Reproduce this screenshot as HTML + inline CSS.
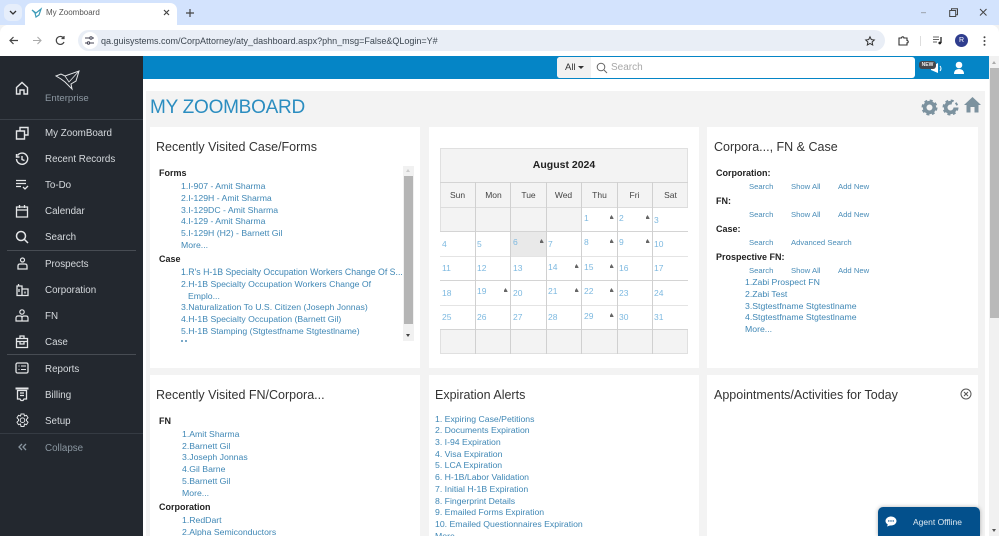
<!DOCTYPE html>
<html><head><meta charset="utf-8"><title>My Zoomboard</title>
<style>
*{box-sizing:border-box}
html,body{margin:0;padding:0;width:999px;height:536px;overflow:hidden;background:#f3f3f3;font-family:"Liberation Sans",sans-serif}
body{filter:blur(.3px)}
.a{position:absolute}
.t{position:absolute;white-space:nowrap;line-height:12px}
.l{font-size:8.7px;color:#3f87b5}
.s{font-size:7.7px;color:#4a8db8}
.b{font-size:9px;color:#222;font-weight:bold}
.h{font-size:12.5px;color:#333;line-height:16px}
.n{font-size:9.8px;color:#d6dade;left:45px;line-height:12px}
.card{position:absolute;background:#fff}
.d{position:absolute;font-size:8.5px;color:#7db9e0;line-height:10px}
.w{position:absolute;font-size:8.5px;color:#444;line-height:10px;text-align:center;width:35px;top:190px}
.c{position:absolute;width:1px;background:#d0d0d0;top:182px;height:172px}
.r{position:absolute;height:1px;background:#d4d4d4;left:440px;width:248px}
.m{position:absolute;width:4px;height:4px;margin:1px 0 0 .5px;background:#666;clip-path:polygon(50% 0,100% 80%,100% 100%,0 100%,0 80%)}
svg{position:absolute;overflow:visible}
</style></head><body>

<!-- browser chrome -->
<div class="a" style="left:0;top:0;width:999px;height:25px;background:#d3e3fd"></div>
<div class="a" style="left:4px;top:4px;width:18px;height:17px;border-radius:6px;background:#e6eefb"></div>
<svg style="left:9px;top:10px" width="8" height="6"><path d="M1 1l3 3 3-3" fill="none" stroke="#333" stroke-width="1.3"/></svg>
<div class="a" style="left:25px;top:3px;width:152px;height:23px;background:#fff;border-radius:7px 7px 0 0"></div>
<svg style="left:31px;top:8px" width="11" height="10"><path d="M1 2l4 3 5-4-2 6-3 2-1-4z" fill="none" stroke="#3d9bb8" stroke-width="1.2"/></svg>
<div class="t" style="left:46px;top:7px;font-size:8px;color:#555">My Zoomboard</div>
<svg style="left:163px;top:9px" width="8" height="8"><path d="M1 1l5 5M6 1L1 6" stroke="#444" stroke-width="1.2"/></svg>
<svg style="left:185px;top:8px" width="10" height="10"><path d="M5 1v8M1 5h8" stroke="#444" stroke-width="1.2"/></svg>
<div class="a" style="left:0;top:25px;width:999px;height:31px;background:#fff;border-radius:8px 8px 0 0"></div>
<div class="a" style="left:78px;top:30px;width:807px;height:21px;border-radius:11px;background:#e9eef6"></div>
<div class="a" style="left:82px;top:32px;width:16px;height:17px;border-radius:8px;background:#fff"></div>
<svg style="left:8px;top:35px" width="11" height="11"><path d="M10 5.500H2M5.500 2L2 5.500 5.500 9" fill="none" stroke="#444" stroke-width="1.2"/></svg>
<svg style="left:32px;top:35px" width="11" height="11"><path d="M1 5.500h8M5.500 2L9 5.500 5.500 9" fill="none" stroke="#aaa" stroke-width="1.1"/></svg>
<svg style="left:55px;top:35px" width="11" height="11"><path d="M8.500 3A4 4 0 1 0 9 7M9 1v2.500H6.500" fill="none" stroke="#444" stroke-width="1.2"/></svg>
<svg style="left:84px;top:36px" width="11" height="10"><path d="M1 2h5M8 2h2M1 7h2M6 7h4" stroke="#445" stroke-width="1"/><circle cx="7" cy="2" r="1.200" fill="none" stroke="#445"/><circle cx="4.500" cy="7" r="1.200" fill="none" stroke="#445"/></svg>
<div class="t" style="left:101px;top:35px;font-size:9px;color:#3c4650">qa.guisystems.com/CorpAttorney/aty_dashboard.aspx?phn_msg=False&amp;QLogin=Y#</div>
<svg style="left:865px;top:36px" width="10" height="10"><path d="M5 .8l1.300 2.800 3 .4-2.200 2 .6 3L5 7.500 2.300 9l.6-3L.7 4l3-.4z" fill="none" stroke="#333" stroke-width="1"/></svg>
<svg style="left:898px;top:35px" width="11" height="11"><path d="M1 3h2.500a1.200 1.200 0 0 1 2.400 0H9v2.500a1.200 1.200 0 0 1 0 2.400V10H1z" fill="none" stroke="#333" stroke-width="1.100"/></svg>
<div class="a" style="left:920px;top:36px;width:1px;height:10px;background:#ddd"></div>
<svg style="left:933px;top:36px" width="10" height="9"><path d="M0 1h6M0 3.500h6M0 6h4" stroke="#666" stroke-width="1"/><path d="M8 1v6" stroke="#222" stroke-width="1.300"/><circle cx="6.800" cy="7" r="1.400" fill="#222"/></svg>
<div class="a" style="left:955px;top:34px;width:13px;height:13px;border-radius:50%;background:#2f3d8e;color:#fff;font-size:7px;line-height:13px;text-align:center">R</div>
<svg style="left:983px;top:36px" width="3" height="10"><circle cx="1.500" cy="1.200" r="1" fill="#444"/><circle cx="1.500" cy="5" r="1" fill="#444"/><circle cx="1.500" cy="8.800" r="1" fill="#444"/></svg>
<div class="t" style="left:921px;top:6px;font-size:9px;color:#777">&#8211;</div>
<svg style="left:949px;top:8px" width="9" height="9"><path d="M.7 2.500h6v6h-6zM2.500 2.500V.7h6v6H6.700" fill="none" stroke="#444" stroke-width="1"/></svg>
<svg style="left:979px;top:8px" width="9" height="9"><path d="M1 1l6.500 6.500M7.500 1L1 7.500" stroke="#444" stroke-width="1"/></svg>

<!-- sidebar -->
<div class="a" style="left:0;top:56px;width:143px;height:480px;background:#23282f"></div>
<svg style="left:15px;top:81px" width="14" height="14"><path d="M1.500 6.500L7 1.500l5.500 5V13H9V9H5v4H1.500z" fill="none" stroke="#e4e6e8" stroke-width="1.400"/></svg>
<svg style="left:55px;top:70px" width="25" height="21"><path d="M1 6L6 4l4 2L24 1l-3 10-5 3 1 5-7-7-4-3z" fill="none" stroke="#e4e6e8" stroke-width="1"/><path d="M10 6l4 6L24 1" fill="none" stroke="#e4e6e8" stroke-width=".8"/></svg>
<div class="t" style="left:45px;top:93px;font-size:9.6px;color:#8e99a3">Enterprise</div>
<div class="a" style="left:0;top:119px;width:143px;height:1px;background:#3a4048"></div>
<div class="a" style="left:7px;top:250px;width:129px;height:1px;background:#474c53"></div>
<div class="a" style="left:7px;top:354px;width:129px;height:1px;background:#474c53"></div>
<div class="a" style="left:0;top:433px;width:143px;height:1px;background:#353b43"></div>

<div class="t n" style="top:128px">My ZoomBoard</div>
<div class="t n" style="top:154px">Recent Records</div>
<div class="t n" style="top:180px">To-Do</div>
<div class="t n" style="top:206px">Calendar</div>
<div class="t n" style="top:232px">Search</div>
<div class="t n" style="top:259px">Prospects</div>
<div class="t n" style="top:285px">Corporation</div>
<div class="t n" style="top:311px">FN</div>
<div class="t n" style="top:337px">Case</div>
<div class="t n" style="top:364px">Reports</div>
<div class="t n" style="top:390px">Billing</div>
<div class="t n" style="top:416px">Setup</div>
<div class="t n" style="top:443px;color:#8a96a0">Collapse</div>

<svg style="left:15px;top:126px" width="14" height="14"><path d="M1.500 5h8v8h-8zM5 5V1.500h8V9H9.500" fill="none" stroke="#e4e6e8" stroke-width="1.400"/></svg>
<svg style="left:15px;top:152px" width="14" height="14"><path d="M2.500 3.500a5.600 5.600 0 1 1-1 3.500M1.500 2v3h3M7 4v3.500l2.500 1" fill="none" stroke="#e4e6e8" stroke-width="1.400"/></svg>
<svg style="left:15px;top:179px" width="14" height="11"><path d="M1 1.500h10M1 4.500h10M1 7.500h5M8 8l2 2 3-3" fill="none" stroke="#e4e6e8" stroke-width="1.300"/></svg>
<svg style="left:15px;top:204px" width="14" height="14"><path d="M1.500 3h11v10h-11zM1.500 6h11M4.500 1v3M9.500 1v3" fill="none" stroke="#e4e6e8" stroke-width="1.300"/></svg>
<svg style="left:15px;top:230px" width="14" height="14"><circle cx="6" cy="6" r="4.500" fill="none" stroke="#e4e6e8" stroke-width="1.500"/><path d="M9.500 9.500l3.500 3.500" stroke="#e4e6e8" stroke-width="1.500"/></svg>
<svg style="left:16px;top:257px" width="13" height="13"><circle cx="6.500" cy="3" r="2" fill="none" stroke="#e4e6e8" stroke-width="1.200"/><path d="M2 12V9q0-2 2-2h5q2 0 2 2v3z" fill="none" stroke="#e4e6e8" stroke-width="1.300"/></svg>
<svg style="left:16px;top:283px" width="13" height="13"><path d="M1 12.500V3h5v9.500zM6 6h6v6.500H6M2.500 1v2M3 6v3M9 8.500v2" fill="none" stroke="#e4e6e8" stroke-width="1.300"/></svg>
<svg style="left:15px;top:309px" width="14" height="13"><circle cx="7" cy="3" r="2.200" fill="none" stroke="#e4e6e8" stroke-width="1.200"/><path d="M1 12V9q0-2 2-2h2.500q1.500 0 1.500 2v3zM7 12V9q0-2 2-2h2q2 0 2 2v3z" fill="none" stroke="#e4e6e8" stroke-width="1.200"/></svg>
<svg style="left:15px;top:335px" width="14" height="13"><path d="M1.500 3.500h11v9h-11zM5 3.500V1h4v2.500M1.500 6.500h11M5 6.500v2.500h4V6.500" fill="none" stroke="#e4e6e8" stroke-width="1.300"/></svg>
<svg style="left:15px;top:362px" width="14" height="12"><rect x="1" y="1" width="12" height="10" rx="1.500" fill="none" stroke="#e4e6e8" stroke-width="1.300"/><path d="M3.500 4h1M6 4h5M3.500 7.500h1M6 7.500h5" stroke="#e4e6e8" stroke-width="1.100"/></svg>
<svg style="left:15px;top:387px" width="14" height="15"><path d="M.5 1.500h13" stroke="#e4e6e8" stroke-width="2"/><path d="M2.500 3.500h9V12H9l-1 1.500H6L5 12H2.500zM5 6h4M5 8.500h4" fill="none" stroke="#e4e6e8" stroke-width="1.300"/></svg>
<svg style="left:15px;top:413px" width="15" height="15"><path d="M6 1h3l.5 2 2-.7 1.500 2.500-1.500 1.500 0 1.400L13 9.200l-1.500 2.500-2-.7L9 13.500H6L5.500 11l-2 .7L2 9.200l1.500-1.500 0-1.400L2 4.800l1.500-2.500 2 .7z" fill="none" stroke="#e4e6e8" stroke-width="1"/><circle cx="7.500" cy="7.200" r="2.300" fill="none" stroke="#e4e6e8" stroke-width="1"/></svg>
<svg style="left:18px;top:443px" width="9" height="8"><path d="M4 1L1 4l3 3M8 1L5 4l3 3" fill="none" stroke="#8a96a0" stroke-width="1.300"/></svg>

<!-- topbar -->
<div class="a" style="left:143px;top:56px;width:846px;height:23px;background:#0585c6"></div>
<div class="a" style="left:143px;top:79px;width:846px;height:457px;background:#fff"></div>
<div class="a" style="left:146px;top:91px;width:839px;height:445px;background:#f3f3f3"></div>
<div class="a" style="left:557px;top:57px;width:358px;height:21px;background:#fff;border-radius:3px"></div>
<div class="a" style="left:557px;top:57px;width:34px;height:21px;background:#f1f1f1;border-radius:3px 0 0 3px"></div>
<div class="t" style="left:565px;top:62px;font-size:9.500px;color:#333">All</div>
<div class="a" style="left:578px;top:66px;width:0;height:0;border-left:3px solid transparent;border-right:3px solid transparent;border-top:3px solid #333"></div>
<svg style="left:596px;top:62px" width="12" height="12"><circle cx="5" cy="5" r="3.800" fill="none" stroke="#666" stroke-width="1"/><path d="M8 8l3 3" stroke="#666" stroke-width="1"/></svg>
<div class="t" style="left:611px;top:62px;font-size:10px;color:#a8a8a8">Search</div>
<svg style="left:928px;top:62px" width="18" height="13"><path d="M3 5l7-4v10L3 8z" fill="#fff"/><path d="M12 4q2 2.500 0 5" fill="none" stroke="#fff" stroke-width="1"/></svg>
<div class="a" style="left:919px;top:61px;width:17px;height:8px;background:#45474d;border-radius:3px;color:#eee;font-size:5px;line-height:8px;text-align:center;font-weight:bold">NEW</div>
<svg style="left:953px;top:61px" width="12" height="14"><circle cx="6" cy="4" r="3.300" fill="#fff"/><path d="M1 13q0-5 5-5t5 5z" fill="#fff"/></svg>

<div class="t" style="left:150px;top:97px;font-size:19px;letter-spacing:-.25px;line-height:22px;color:#2b8dc0">MY ZOOMBOARD</div>
<svg style="left:921px;top:99px" width="17" height="17"><circle cx="8.500" cy="8.500" r="4.800" fill="none" stroke="#7c929f" stroke-width="3.600"/><circle cx="8.500" cy="8.500" r="7" fill="none" stroke="#7c929f" stroke-width="2" stroke-dasharray="3 2.500"/></svg>
<svg style="left:942px;top:99px" width="17" height="17"><circle cx="8.500" cy="8.500" r="4.800" fill="none" stroke="#7c929f" stroke-width="3.600" stroke-dasharray="24 8"/><circle cx="8.500" cy="8.500" r="7" fill="none" stroke="#7c929f" stroke-width="2" stroke-dasharray="3 2.500"/></svg>
<svg style="left:964px;top:97px" width="17" height="16"><path d="M8.500 0L17 8h-2.500v7.500H10.500V10h-4v5.500H2.500V8H0z" fill="#7c929f"/></svg>

<!-- cards -->
<div class="card" style="left:150px;top:127px;width:270px;height:241px"></div>
<div class="card" style="left:429px;top:127px;width:270px;height:241px"></div>
<div class="card" style="left:707px;top:127px;width:271px;height:241px"></div>
<div class="card" style="left:150px;top:375px;width:270px;height:161px"></div>
<div class="card" style="left:429px;top:375px;width:270px;height:161px"></div>
<div class="card" style="left:707px;top:375px;width:271px;height:161px"></div>

<!-- card 1 -->
<div class="t h" style="left:156px;top:139px">Recently Visited Case/Forms</div>
<div class="t b" style="left:159px;top:167px">Forms</div>
<div class="t l" style="left:181px;top:180px">1.I-907 - Amit Sharma</div>
<div class="t l" style="left:181px;top:192px">2.I-129H - Amit Sharma</div>
<div class="t l" style="left:181px;top:204px">3.I-129DC - Amit Sharma</div>
<div class="t l" style="left:181px;top:215px">4.I-129 - Amit Sharma</div>
<div class="t l" style="left:181px;top:227px">5.I-129H (H2) - Barnett Gil</div>
<div class="t l" style="left:181px;top:239px">More...</div>
<div class="t b" style="left:159px;top:253px">Case</div>
<div class="t l" style="left:181px;top:266px;font-size:8.75px">1.R's H-1B Specialty Occupation Workers Change Of S...</div>
<div class="t l" style="left:181px;top:278px">2.H-1B Specialty Occupation Workers Change Of</div>
<div class="t l" style="left:188px;top:290px">Emplo...</div>
<div class="t l" style="left:181px;top:301px">3.Naturalization To U.S. Citizen (Joseph Jonnas)</div>
<div class="t l" style="left:181px;top:313px">4.H-1B Specialty Occupation (Barnett Gil)</div>
<div class="t l" style="left:181px;top:325px">5.H-1B Stamping (Stgtestfname Stgtestlname)</div>
<div class="a" style="left:181px;top:340px;width:6px;height:2px;border-left:2px solid #7aa9c8;border-right:2px solid #7aa9c8"></div>
<div class="a" style="left:403px;top:166px;width:11px;height:175px;background:#f1f1f1"></div>
<div class="a" style="left:404px;top:176px;width:9px;height:148px;background:#b5b5b5"></div>
<div class="a" style="left:406px;top:169px;width:0;height:0;border-left:2.500px solid transparent;border-right:2.500px solid transparent;border-bottom:3px solid #ccc"></div>
<div class="a" style="left:406px;top:334px;width:0;height:0;border-left:2.500px solid transparent;border-right:2.500px solid transparent;border-top:3px solid #444"></div>

<!-- calendar -->
<div class="a" style="left:440px;top:148px;width:248px;height:206px;background:#f3f3f3;border:1px solid #e0e0e0"></div>
<div class="a" style="left:581px;top:207px;width:107px;height:25px;background:#fff"></div>
<div class="a" style="left:440px;top:232px;width:248px;height:97px;background:#fff"></div>
<div class="a" style="left:511px;top:232px;width:35px;height:24px;background:#e9e9e9"></div>
<div class="t" style="left:440px;top:159px;width:248px;text-align:center;font-size:10.500px;font-weight:bold;color:#222">August 2024</div>
<div class="r" style="top:182px"></div><div class="r" style="top:207px;background:#dcdcdc"></div><div class="r" style="top:231px"></div><div class="r" style="top:256px;background:#e4e4e4"></div><div class="r" style="top:280px"></div><div class="r" style="top:305px;background:#e4e4e4"></div><div class="r" style="top:329px"></div>
<div class="c" style="left:475px"></div><div class="c" style="left:510px"></div><div class="c" style="left:546px"></div><div class="c" style="left:581px"></div><div class="c" style="left:617px"></div><div class="c" style="left:652px"></div>
<div class="w" style="left:440px">Sun</div><div class="w" style="left:476px">Mon</div><div class="w" style="left:511px">Tue</div><div class="w" style="left:546px">Wed</div><div class="w" style="left:582px">Thu</div><div class="w" style="left:617px">Fri</div><div class="w" style="left:653px">Sat</div>

<div class="d" style="left:584px;top:213px">1</div><div class="m" style="left:609px;top:214px"></div>
<div class="d" style="left:619px;top:213px">2</div><div class="m" style="left:645px;top:214px"></div>
<div class="d" style="left:654px;top:215px">3</div>
<div class="d" style="left:442px;top:239px">4</div><div class="d" style="left:477px;top:239px">5</div>
<div class="d" style="left:513px;top:237px">6</div><div class="m" style="left:539px;top:238px"></div>
<div class="d" style="left:548px;top:239px">7</div>
<div class="d" style="left:584px;top:237px">8</div><div class="m" style="left:609px;top:238px"></div>
<div class="d" style="left:619px;top:237px">9</div><div class="m" style="left:645px;top:238px"></div>
<div class="d" style="left:654px;top:239px">10</div>
<div class="d" style="left:442px;top:263px">11</div><div class="d" style="left:477px;top:263px">12</div><div class="d" style="left:513px;top:263px">13</div>
<div class="d" style="left:548px;top:262px">14</div><div class="m" style="left:574px;top:263px"></div>
<div class="d" style="left:584px;top:262px">15</div><div class="m" style="left:609px;top:263px"></div>
<div class="d" style="left:619px;top:263px">16</div><div class="d" style="left:654px;top:263px">17</div>
<div class="d" style="left:442px;top:288px">18</div>
<div class="d" style="left:477px;top:286px">19</div><div class="m" style="left:503px;top:287px"></div>
<div class="d" style="left:513px;top:288px">20</div>
<div class="d" style="left:548px;top:286px">21</div><div class="m" style="left:574px;top:287px"></div>
<div class="d" style="left:584px;top:286px">22</div><div class="m" style="left:609px;top:287px"></div>
<div class="d" style="left:619px;top:288px">23</div><div class="d" style="left:654px;top:288px">24</div>
<div class="d" style="left:442px;top:312px">25</div><div class="d" style="left:477px;top:312px">26</div><div class="d" style="left:513px;top:312px">27</div><div class="d" style="left:548px;top:312px">28</div>
<div class="d" style="left:584px;top:311px">29</div><div class="m" style="left:609px;top:312px"></div>
<div class="d" style="left:619px;top:312px">30</div><div class="d" style="left:654px;top:312px">31</div>

<!-- card 3 -->
<div class="t h" style="left:714px;top:139px">Corpora..., FN &amp; Case</div>
<div class="t b" style="left:716px;top:167px">Corporation:</div>
<div class="t s" style="left:749px;top:181px">Search</div><div class="t s" style="left:791px;top:181px">Show All</div><div class="t s" style="left:838px;top:181px">Add New</div>
<div class="t b" style="left:716px;top:195px">FN:</div>
<div class="t s" style="left:749px;top:209px">Search</div><div class="t s" style="left:791px;top:209px">Show All</div><div class="t s" style="left:838px;top:209px">Add New</div>
<div class="t b" style="left:716px;top:223px">Case:</div>
<div class="t s" style="left:749px;top:237px">Search</div><div class="t s" style="left:791px;top:237px">Advanced Search</div>
<div class="t b" style="left:716px;top:251px">Prospective FN:</div>
<div class="t s" style="left:749px;top:265px">Search</div><div class="t s" style="left:791px;top:265px">Show All</div><div class="t s" style="left:838px;top:265px">Add New</div>
<div class="t l" style="left:745px;top:276px">1.Zabi Prospect FN</div>
<div class="t l" style="left:745px;top:288px">2.Zabi Test</div>
<div class="t l" style="left:745px;top:300px">3.Stgtestfname Stgtestlname</div>
<div class="t l" style="left:745px;top:311px">4.Stgtestfname Stgtestlname</div>
<div class="t l" style="left:745px;top:323px">More...</div>

<!-- card 4 -->
<div class="t h" style="left:156px;top:387px">Recently Visited FN/Corpora...</div>
<div class="t b" style="left:159px;top:415px">FN</div>
<div class="t l" style="left:182px;top:428px">1.Amit Sharma</div>
<div class="t l" style="left:182px;top:440px">2.Barnett Gil</div>
<div class="t l" style="left:182px;top:451px">3.Joseph Jonnas</div>
<div class="t l" style="left:182px;top:463px">4.Gil Barne</div>
<div class="t l" style="left:182px;top:475px">5.Barnett Gil</div>
<div class="t l" style="left:182px;top:487px">More...</div>
<div class="t b" style="left:159px;top:501px">Corporation</div>
<div class="t l" style="left:182px;top:514px">1.RedDart</div>
<div class="t l" style="left:182px;top:526px">2.Alpha Semiconductors</div>

<!-- card 5 -->
<div class="t h" style="left:435px;top:387px">Expiration Alerts</div>
<div class="t l" style="left:435px;top:413px">1. Expiring Case/Petitions</div>
<div class="t l" style="left:435px;top:424px">2. Documents Expiration</div>
<div class="t l" style="left:435px;top:436px">3. I-94 Expiration</div>
<div class="t l" style="left:435px;top:448px">4. Visa Expiration</div>
<div class="t l" style="left:435px;top:459px">5. LCA Expiration</div>
<div class="t l" style="left:435px;top:471px">6. H-1B/Labor Validation</div>
<div class="t l" style="left:435px;top:483px">7. Initial H-1B Expiration</div>
<div class="t l" style="left:435px;top:495px">8. Fingerprint Details</div>
<div class="t l" style="left:435px;top:506px">9. Emailed Forms Expiration</div>
<div class="t l" style="left:435px;top:518px">10. Emailed Questionnaires Expiration</div>
<div class="t l" style="left:435px;top:530px">More...</div>

<!-- card 6 -->
<div class="t h" style="left:714px;top:387px">Appointments/Activities for Today</div>
<svg style="left:960px;top:388px" width="12" height="12"><circle cx="6" cy="6" r="5" fill="none" stroke="#555" stroke-width="1"/><path d="M4 4l4 4M8 4l-4 4" stroke="#555" stroke-width="1"/></svg>

<!-- agent -->
<div class="a" style="left:878px;top:507px;width:102px;height:29px;background:#03508c;border-radius:5px 5px 0 0;box-shadow:0 0 4px rgba(0,0,0,.3)"></div>
<svg style="left:885px;top:516px" width="12" height="11"><path d="M6 .5c3 0 5.500 2 5.500 4.500S9 9.500 6 9.500H5L2 10.500l.8-2C1.300 7.500.5 6.300.5 5 .5 2.500 3 .5 6 .5z" fill="#fff"/><circle cx="3.800" cy="5" r=".7" fill="#03508c"/><circle cx="6" cy="5" r=".7" fill="#03508c"/><circle cx="8.200" cy="5" r=".7" fill="#03508c"/></svg>
<div class="t" style="left:913px;top:516px;font-size:8.500px;color:#dfe9f1">Agent Offline</div>

<!-- page scrollbar -->
<div class="a" style="left:989px;top:56px;width:10px;height:480px;background:#f1f1f1"></div>
<div class="a" style="left:990px;top:68px;width:9px;height:250px;background:#b9b9b9"></div>
<div class="a" style="left:992px;top:61px;width:0;height:0;border-left:2.500px solid transparent;border-right:2.500px solid transparent;border-bottom:3px solid #aaa"></div>
<div class="a" style="left:992px;top:529px;width:0;height:0;border-left:2.500px solid transparent;border-right:2.500px solid transparent;border-top:3px solid #555"></div>
</body></html>
